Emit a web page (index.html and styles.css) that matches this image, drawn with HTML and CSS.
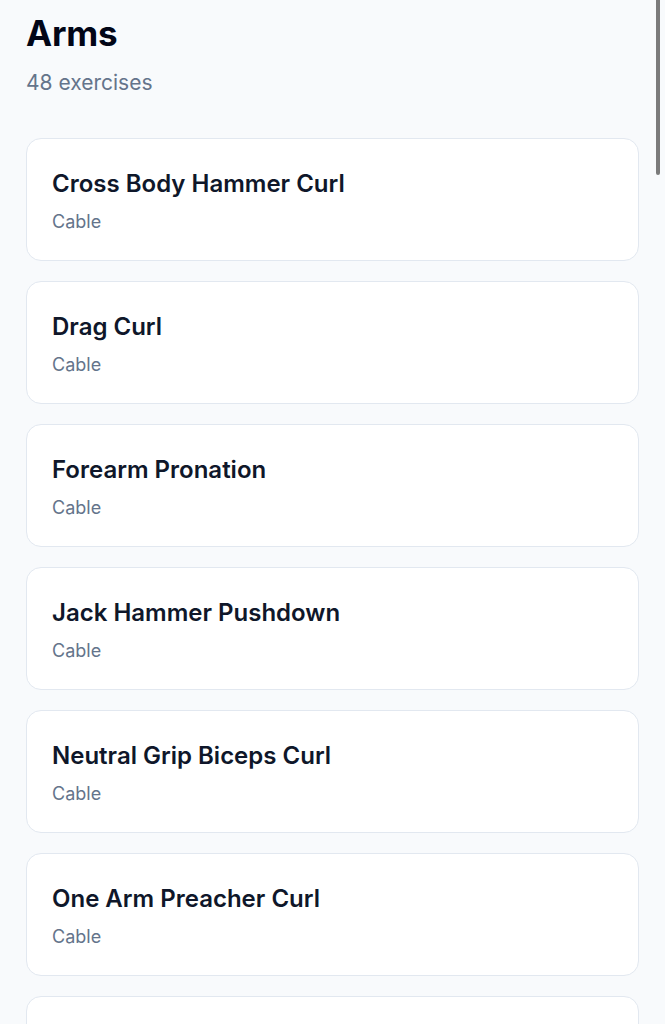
FILE: index.html
```html
<!DOCTYPE html>
<html lang="en">
<head>
<meta charset="utf-8">
<title>Arms</title>
<link rel="stylesheet" href="styles.css">
</head>
<body>
<main class="page">
  <header class="header">
    <h1 class="title">Arms</h1>
    <p class="count">48 exercises</p>
  </header>
  <ul class="list">
    <li class="card"><div class="name">Cross Body Hammer Curl</div><div class="equip">Cable</div></li>
    <li class="card"><div class="name">Drag Curl</div><div class="equip">Cable</div></li>
    <li class="card"><div class="name">Forearm Pronation</div><div class="equip">Cable</div></li>
    <li class="card"><div class="name">Jack Hammer Pushdown</div><div class="equip">Cable</div></li>
    <li class="card"><div class="name">Neutral Grip Biceps Curl</div><div class="equip">Cable</div></li>
    <li class="card"><div class="name">One Arm Preacher Curl</div><div class="equip">Cable</div></li>
    <li class="card"><div class="name">One Arm Pushdown</div><div class="equip">Cable</div></li>
  </ul>
</main>
<div class="scroll-indicator"></div>
</body>
</html>
```

FILE: styles.css
```css
html {
  scrollbar-width: none;
}
html::-webkit-scrollbar {
  display: none;
}
body {
  margin: 0;
  background: #f8fafc;
  font-family: Inter, "Noto Sans", sans-serif;
  color: #0f172a;
}
.page {
  padding: 12px 26px 40px;
}
.header {
  display: flex;
  flex-direction: column;
  gap: 15px;
}
.title {
  margin: 0;
  font-size: 35px;
  line-height: 42px;
  font-weight: 700;
  color: #020617;
  letter-spacing: -0.2px;
}
.count {
  margin: 0;
  font-size: 21px;
  line-height: 28px;
  color: #64748b;
}
.list {
  list-style: none;
  margin: 41px 0 0;
  padding: 0;
  display: flex;
  flex-direction: column;
  gap: 20px;
}
.card {
  background: #ffffff;
  border: 1px solid #e2e8f0;
  border-radius: 15px;
  padding: 29px 25px 26px;
  display: flex;
  flex-direction: column;
  gap: 10px;
}
.name {
  font-size: 24px;
  line-height: 32px;
  font-weight: 600;
  color: #0f172a;
}
.equip {
  font-size: 18px;
  line-height: 24px;
  color: #64748b;
}
.scroll-indicator {
  position: fixed;
  top: 0;
  right: 5px;
  width: 4px;
  height: 175px;
  border-radius: 0 0 2px 2px;
  background: #7b7b7b;
}
```
